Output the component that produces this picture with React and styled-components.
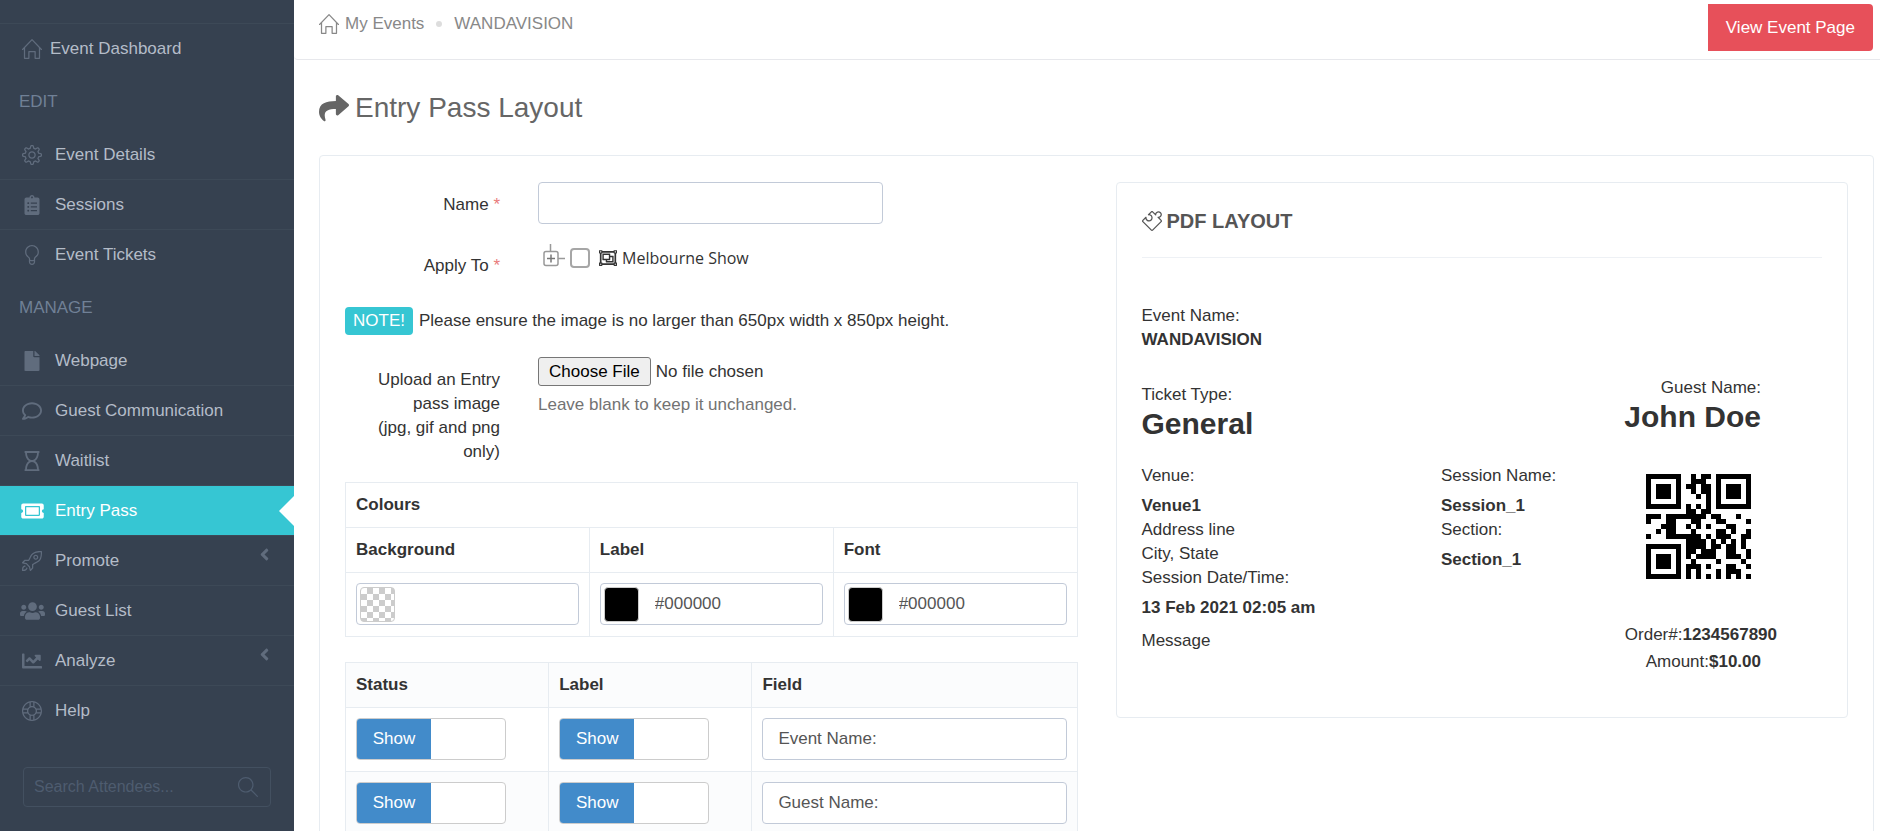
import React, { useState } from "react";
import styled, { createGlobalStyle, css } from "styled-components";
import {
    SlHome,
    SlSettings,
    SlBulb,
    SlRocket,
    SlSupport,
    SlMagnifier,
    SlPuzzle,
} from "react-icons/sl";
import {
    FaClipboardList,
    FaFile,
    FaRegComment,
    FaRegHourglass,
    FaTicketAlt,
    FaUsers,
    FaChartLine,
    FaAngleLeft,
    FaShare,
    FaRegObjectGroup,
} from "react-icons/fa";

const GlobalStyle = createGlobalStyle`
    * {
        box-sizing: border-box;
    }

    body {
        margin: 0;
        overflow: hidden;
        background: #fff;
        color: #333;
        font-family: Arial, "Liberation Sans", sans-serif;
        font-size: 17px;
        line-height: 24px;
    }

    input,
    button {
        font: inherit;
    }
`;

const Page = styled.div`
    display: flex;
    height: 100vh;
`;

const Sidebar = styled.nav`
    flex: 0 0 294px;
    min-width: 0;
    padding-top: 23px;
    background: #364150;
`;

const Menu = styled.ul`
    margin: 0;
    padding: 0;
    list-style: none;
`;

const MenuHeading = styled.li`
    height: 56px;
    padding: 17px 19px 15px;
    color: #708096;
`;

const MenuRow = styled.li`
    border-top: 1px solid #3d4957;

    ${MenuHeading} + & {
        border-top-color: transparent;
    }
`;

const MenuIcon = styled.span`
    display: flex;
    justify-content: center;
    width: 24px;
    color: #606c7d;

    svg {
        flex-shrink: 0;
        width: ${({ $wide }) => ($wide ? 25 : 20)}px;
        height: 20px;
    }
`;

const MenuLink = styled.a`
    position: relative;
    display: flex;
    align-items: center;
    gap: ${({ $compact }) => ($compact ? 6 : 11)}px;
    height: 49px;
    padding: 0 20px;
    color: #b4bcc8;
    text-decoration: none;

    ${({ $active }) =>
        $active &&
        css`
            background: #36c6d3;
            color: #fff;

            ${MenuIcon} {
                color: #fff;
            }

            &::after {
                content: "";
                position: absolute;
                right: 0;
                border: 15px solid transparent;
                border-left: 0;
                border-right-color: #fff;
            }
        `}
`;

const MenuArrow = styled.span`
    display: flex;
    margin-left: auto;
    padding-bottom: 12px;
    color: #606c7d;
    font-size: 19px;
`;

const Search = styled.div`
    display: flex;
    align-items: center;
    height: 40px;
    margin: 32px 23px 0;
    padding: 0 12px 0 10px;
    border: 1px solid #435060;
    border-radius: 4px;
`;

const SearchInput = styled.input`
    flex: 1;
    min-width: 0;
    padding: 0;
    border: 0;
    outline: 0;
    background: none;
    color: #b4bcc8;
    font-size: 16px;

    &::placeholder {
        color: #4e5c6f;
    }
`;

const SearchButton = styled.button`
    display: flex;
    padding: 0;
    border: 0;
    background: none;
    color: #4e5c6f;
    font-size: 20px;
`;

const Main = styled.main`
    flex: 1;
    min-width: 0;
`;

const Header = styled.header`
    display: flex;
    justify-content: space-between;
    align-items: flex-start;
    height: 60px;
    padding: 4px 7px 0 25px;
    border-bottom: 1px solid #e7e8ec;
    border-bottom-left-radius: 4px;
`;

const Breadcrumb = styled.div`
    display: flex;
    align-items: center;
    gap: 6px;
    height: 40px;
    color: #888;

    a {
        color: inherit;
        text-decoration: none;
    }
`;

const Dot = styled.span`
    width: 6px;
    height: 6px;
    margin: 0 6px;
    border-radius: 50%;
    background: #ddd;
`;

const ViewButton = styled.button`
    height: 47px;
    padding: 0 18px;
    border: 0;
    border-radius: 0 4px 4px 0;
    background: #e7505a;
    color: #fff;
    cursor: pointer;
`;

const Title = styled.h1`
    display: flex;
    align-items: center;
    gap: 6px;
    margin: 30px 25px;
    color: #666;
    font-size: 28px;
    font-weight: 400;
    line-height: 35px;

    svg {
        font-size: 30px;
    }
`;

const Portlet = styled.section`
    display: grid;
    grid-template-columns: 1fr 1fr;
    align-items: start;
    gap: 38px;
    margin: 0 6px 0 25px;
    padding: 26px 25px;
    border: 1px solid #e7ecf1;
    border-radius: 4px;
`;

const Form = styled.form`
    min-width: 0;
`;

const FormRow = styled.div`
    display: grid;
    grid-template-columns: 155px 1fr;
    column-gap: 38px;
    margin-top: ${({ $gap = 0 }) => $gap}px;
`;

const Label = styled.label`
    padding-top: 11px;
    text-align: right;
`;

const Required = styled.span`
    color: #e97b7b;
`;

const Input = styled.input`
    display: block;
    width: 100%;
    height: 42px;
    padding: 0 15px;
    border: 1px solid #c2cad8;
    border-radius: 4px;
    background: #fff;
    color: #555;
`;

const NameInput = styled(Input)`
    width: 64%;
`;

const Tree = styled.div`
    display: flex;
    align-items: center;
    gap: 5px;
    height: 30px;
    padding-left: 5px;

    > svg {
        margin-left: 4px;
    }
`;

const TreeToggle = styled.button`
    display: flex;
    padding: 0 0 4px;
    border: 0;
    background: none;
`;

const TreeCheck = styled.input`
    appearance: none;
    width: 20px;
    height: 20px;
    margin: 0;
    border: 2px solid #a6a6a6;
    border-radius: 4px;
    background: #fff;
`;

const TreeLabel = styled.label`
    font-family: "Open Sans", sans-serif;
    font-size: 16px;
`;

const Note = styled.div`
    display: flex;
    align-items: center;
    gap: 6px;
    margin-top: 29px;
`;

const Badge = styled.span`
    padding: 2px 8px;
    border-radius: 4px;
    background: #36c6d3;
    color: #fff;
`;

const FileInput = styled.input`
    display: block;
    width: 100%;
    height: 29px;

    &::file-selector-button {
        height: 29px;
        margin-right: 5px;
        padding: 0 10px;
        border: 1px solid #767676;
        border-radius: 3px;
        background: #efefef;
        color: #000;
        font: inherit;
    }
`;

const Help = styled.div`
    margin-top: 7px;
    color: #737373;
`;

const Table = styled.table`
    width: 100%;
    margin-top: ${({ $gap }) => $gap}px;
    border-collapse: collapse;
    table-layout: fixed;

    th,
    td {
        border: 1px solid #e7ecf1;
        text-align: left;
    }

    th {
        padding: 10px;
    }

    td {
        padding: 10px 10px 11px;
    }

    ${({ $striped }) =>
        $striped &&
        css`
            thead tr,
            tbody tr:nth-child(even) {
                background: #fbfcfd;
            }
        `}
`;

const Col = styled.col`
    width: calc(100% * ${({ $span }) => $span} / 18);
`;

const ColourBox = styled.div`
    display: flex;
    align-items: center;
    gap: 16px;
    height: 42px;
    padding: 0 3px;
    border: 1px solid #c2cad8;
    border-radius: 4px;
`;

const ColourValue = styled.input`
    flex: 1;
    min-width: 0;
    padding: 0;
    border: 0;
    outline: 0;
    color: #555;
`;

const Swatch = styled.button`
    width: 35px;
    height: 35px;
    padding: 0;
    border: 1px solid #ccc;
    border-radius: 4px;
    background: ${({ $colour }) =>
        $colour ||
        "conic-gradient(#ccc 25%, #fff 0 50%, #ccc 0 75%, #fff 0) 0 0 / 12px 12px"};
`;

const ToggleBox = styled.label`
    display: block;
    width: 150px;
    height: 42px;
    overflow: hidden;
    border: 1px solid #ccc;
    border-radius: 4px;
    background: #fff;
    cursor: pointer;

    input {
        position: absolute;
        opacity: 0;
    }
`;

const ToggleState = styled.span`
    display: block;
    width: 50%;
    height: 100%;
    margin-left: ${({ $on }) => ($on ? 0 : "50%")};
    background: ${({ $on }) => ($on ? "#428bca" : "#eee")};
    color: ${({ $on }) => ($on ? "#fff" : "#333")};
    line-height: 40px;
    text-align: center;
`;

const Pdf = styled.section`
    min-width: 0;
    padding: 25px;
    border: 1px solid #e7ecf1;
    border-radius: 4px;
`;

const PdfTitle = styled.h2`
    display: flex;
    align-items: center;
    gap: 5px;
    margin: 0 0 46px;
    padding-bottom: 23px;
    border-bottom: 1px solid #eef1f5;
    color: #555;
    font-size: 20px;
    line-height: 26px;
`;

const PdfBlock = styled.div`
    display: flex;
    flex-direction: column;
`;

const PdfNames = styled.div`
    display: flex;
    justify-content: space-between;
    align-items: flex-end;
    margin-top: 24px;
`;

const PdfGuest = styled(PdfBlock)`
    margin-right: 61px;
    padding-bottom: 7px;
    text-align: right;
`;

const BigValue = styled.b`
    font-size: 30px;
    line-height: 33px;
`;

const PdfDetails = styled.div`
    display: grid;
    grid-template-columns: 44% 1fr auto;
    align-items: start;
    margin-top: 24px;
`;

const Value = styled.b`
    margin-top: 6px;
`;

const Message = styled.span`
    margin-top: 9px;
`;

const Order = styled(PdfBlock)`
    align-items: flex-end;
    min-width: 157px;
    margin: 10px 45px 18px 0;
`;

const Qr = styled.svg`
    align-self: center;
    width: 105px;
    height: 105px;
    margin-bottom: 44px;
`;

const Amount = styled.span`
    margin-top: 3px;
    padding-right: 16px;
`;

const editLinks = [
    { label: "Event Details", icon: SlSettings },
    { label: "Sessions", icon: FaClipboardList },
    { label: "Event Tickets", icon: SlBulb },
];

const manageLinks = [
    { label: "Webpage", icon: FaFile },
    { label: "Guest Communication", icon: FaRegComment },
    { label: "Waitlist", icon: FaRegHourglass },
    { label: "Entry Pass", icon: FaTicketAlt, wide: true, active: true },
    { label: "Promote", icon: SlRocket, nested: true },
    { label: "Guest List", icon: FaUsers, wide: true },
    { label: "Analyze", icon: FaChartLine, nested: true },
    { label: "Help", icon: SlSupport },
];

const colours = [
    { label: "Background", value: "" },
    { label: "Label", value: "#000000" },
    { label: "Font", value: "#000000" },
];

const fields = ["Event Name:", "Guest Name:"];

const qrRows = [
    "111111100101101111111",
    "100000100111001000001",
    "101110101101101011101",
    "101110100101101011101",
    "101110100010101011101",
    "100000100000101000001",
    "111111101010101111111",
    "000000001101100000000",
    "111011111111011000100",
    "100011000110001100001",
    "000111001010100011000",
    "001011000100001101001",
    "100011111110101110011",
    "000000001111010101010",
    "111111101111011011010",
    "100000101101110011001",
    "101110101011110011101",
    "101110100100001000010",
    "101110101110100011001",
    "100000101010001011100",
    "111111101010101010101",
];

const MenuItem = ({ label, icon: Icon, active, nested, compact, wide }) => (
    <MenuRow>
        <MenuLink href="#" $active={active} $compact={compact}>
            <MenuIcon $wide={wide}>
                <Icon />
            </MenuIcon>
            {label}
            {nested && (
                <MenuArrow>
                    <FaAngleLeft />
                </MenuArrow>
            )}
        </MenuLink>
    </MenuRow>
);

const Navigation = () => (
    <Sidebar>
        <Menu>
            <MenuItem label="Event Dashboard" icon={SlHome} compact />
            <MenuHeading>EDIT</MenuHeading>
            {editLinks.map((link) => (
                <MenuItem key={link.label} {...link} />
            ))}
            <MenuHeading>MANAGE</MenuHeading>
            {manageLinks.map((link) => (
                <MenuItem key={link.label} {...link} />
            ))}
        </Menu>
        <Search>
            <SearchInput
                type="text"
                aria-label="Search Attendees"
                placeholder="Search Attendees..."
            />
            <SearchButton type="button" aria-label="Search">
                <SlMagnifier />
            </SearchButton>
        </Search>
    </Sidebar>
);

const ColourInput = ({ label, value }) => {
    const [colour, setColour] = useState(value);

    return (
        <ColourBox>
            <Swatch
                type="button"
                aria-label={`Pick ${label} colour`}
                $colour={colour}
            />
            <ColourValue
                type="text"
                aria-label={label}
                value={colour}
                onChange={(e) => setColour(e.target.value)}
            />
        </ColourBox>
    );
};

const Toggle = ({ label }) => {
    const [on, setOn] = useState(true);

    return (
        <ToggleBox>
            <input
                type="checkbox"
                aria-label={label}
                checked={on}
                onChange={() => setOn(!on)}
            />
            <ToggleState $on={on}>{on ? "Show" : "Hide"}</ToggleState>
        </ToggleBox>
    );
};

const ExpandIcon = () => (
    <svg width="22" height="24" viewBox="0 0 22 24" fill="none" strokeWidth="1.5">
        <path d="M7.5 0V7M15 14.5H22" stroke="#999" />
        <rect x="1" y="7.5" width="14" height="14" rx="2" stroke="#999" />
        <path d="M8 10.5V18.5M4 14.5H12" stroke="#777" />
    </svg>
);

const QrCode = () => (
    <Qr viewBox="0 0 21 21" shapeRendering="crispEdges" aria-hidden="true">
        {qrRows.map((row, y) =>
            row
                .split("")
                .map((cell, x) =>
                    cell === "1" ? (
                        <rect key={`${x}-${y}`} x={x} y={y} width="1" height="1" />
                    ) : null
                )
        )}
    </Qr>
);

const PassForm = () => (
    <Form>
        <FormRow>
            <Label htmlFor="pass-name">
                Name <Required>*</Required>
            </Label>
            <NameInput id="pass-name" type="text" />
        </FormRow>
        <FormRow $gap={19}>
            <Label htmlFor="apply-to">
                Apply To <Required>*</Required>
            </Label>
            <Tree>
                <TreeToggle type="button" aria-label="Expand">
                    <ExpandIcon />
                </TreeToggle>
                <TreeCheck id="apply-to" type="checkbox" />
                <FaRegObjectGroup size={18} />
                <TreeLabel htmlFor="apply-to">Melbourne Show</TreeLabel>
            </Tree>
        </FormRow>
        <Note>
            <Badge>NOTE!</Badge>
            Please ensure the image is no larger than 650px width x 850px height.
        </Note>
        <FormRow $gap={22}>
            <Label htmlFor="pass-image">
                Upload an Entry pass image
                <br />
                (jpg, gif and png only)
            </Label>
            <div>
                <FileInput id="pass-image" type="file" />
                <Help>Leave blank to keep it unchanged.</Help>
            </div>
        </FormRow>
        <Table $gap={18}>
            <thead>
                <tr>
                    <th colSpan="3">Colours</th>
                </tr>
                <tr>
                    {colours.map(({ label }) => (
                        <th key={label}>{label}</th>
                    ))}
                </tr>
            </thead>
            <tbody>
                <tr>
                    {colours.map((colour) => (
                        <td key={colour.label}>
                            <ColourInput {...colour} />
                        </td>
                    ))}
                </tr>
            </tbody>
        </Table>
        <Table $gap={25} $striped>
            <colgroup>
                <Col $span={5} />
                <Col $span={5} />
                <Col $span={8} />
            </colgroup>
            <thead>
                <tr>
                    <th>Status</th>
                    <th>Label</th>
                    <th>Field</th>
                </tr>
            </thead>
            <tbody>
                {fields.map((field) => (
                    <tr key={field}>
                        <td>
                            <Toggle label={`${field} status`} />
                        </td>
                        <td>
                            <Toggle label={`${field} label`} />
                        </td>
                        <td>
                            <Input
                                type="text"
                                aria-label={field}
                                defaultValue={field}
                            />
                        </td>
                    </tr>
                ))}
            </tbody>
        </Table>
    </Form>
);

const PdfLayout = () => (
    <Pdf>
        <PdfTitle>
            <SlPuzzle size={20} />
            PDF LAYOUT
        </PdfTitle>
        <PdfBlock>
            Event Name:
            <b>WANDAVISION</b>
        </PdfBlock>
        <PdfNames>
            <PdfBlock>
                Ticket Type:
                <BigValue>General</BigValue>
            </PdfBlock>
            <PdfGuest>
                Guest Name:
                <BigValue>John Doe</BigValue>
            </PdfGuest>
        </PdfNames>
        <PdfDetails>
            <PdfBlock>
                Venue:
                <Value>Venue1</Value>
                <span>Address line</span>
                <span>City, State</span>
                <span>Session Date/Time:</span>
                <Value>13 Feb 2021 02:05 am</Value>
                <Message>Message</Message>
            </PdfBlock>
            <PdfBlock>
                Session Name:
                <Value>Session_1</Value>
                <span>Section:</span>
                <Value>Section_1</Value>
            </PdfBlock>
            <Order>
                <QrCode />
                <span>
                    Order#:<b>1234567890</b>
                </span>
                <Amount>
                    Amount:<b>$10.00</b>
                </Amount>
            </Order>
        </PdfDetails>
    </Pdf>
);

const App = () => (
    <Page>
        <GlobalStyle />
        <Navigation />
        <Main>
            <Header>
                <Breadcrumb>
                    <SlHome size={20} />
                    <a href="#">My Events</a>
                    <Dot />
                    <a href="#">WANDAVISION</a>
                </Breadcrumb>
                <ViewButton type="button">View Event Page</ViewButton>
            </Header>
            <Title>
                <FaShare />
                Entry Pass Layout
            </Title>
            <Portlet>
                <PassForm />
                <PdfLayout />
            </Portlet>
        </Main>
    </Page>
);

export default App;
